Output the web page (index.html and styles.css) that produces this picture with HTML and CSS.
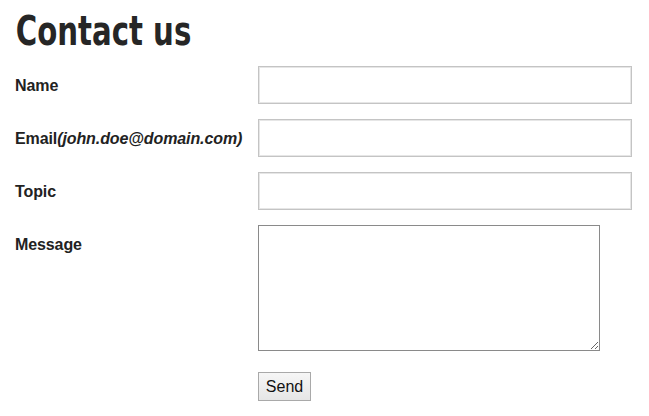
FILE: index.html
```html
<!DOCTYPE html>
<html>
<head>
<meta charset="utf-8">
<link rel="stylesheet" href="styles.css">
</head>
<body>
<div class="page">
  <h1 class="title"><span class="title-text">Contact us</span></h1>
  <form class="form">
    <label class="label" for="name">Name</label>
    <input class="field" id="name" type="text">
    <label class="label" for="email">Email<em>(john.doe@domain.com)</em></label>
    <input class="field" id="email" type="text">
    <label class="label" for="topic">Topic</label>
    <input class="field" id="topic" type="text">
    <label class="label" for="message">Message</label>
    <textarea class="area" id="message"></textarea>
    <span></span>
    <div class="actions"><button class="send" type="button">Send</button></div>
  </form>
</div>
</body>
</html>
```
FILE: styles.css
```css
html, body {
  margin: 0;
  padding: 0;
  background: #fff;
}
.page {
  padding: 0 15px;
  font-family: "Liberation Sans", Arial, sans-serif;
  color: #222;
}
.title {
  margin: 0;
  padding-top: 8px;
  height: 58px;
  font-family: "DejaVu Sans", sans-serif;
  font-weight: bold;
  font-size: 40px;
  line-height: 46px;
  color: #262626;
}
.title-text {
  display: inline-block;
  transform: scaleX(0.73);
  transform-origin: 0 50%;
  padding-left: 1px;
}
.form {
  display: grid;
  grid-template-columns: 243px 1fr;
  row-gap: 15px;
  align-items: start;
}
.label {
  font-weight: bold;
  font-size: 16px;
  line-height: 36px;
  padding-top: 2px;
  color: #222;
  letter-spacing: -0.1px;
}
.label em {
  font-style: italic;
}
.field {
  box-sizing: border-box;
  width: 374px;
  height: 38px;
  margin: 0;
  border: 1px solid #c4c4c4;
  box-shadow: inset 0 0 0 1px #e6e6e6;
  background: #fff;
  padding: 4px;
}
.area {
  box-sizing: border-box;
  width: 342px;
  height: 126px;
  margin: 0;
  border: 1px solid #8a8a8a;
  background: #fff;
  padding: 2px;
}
.actions {
  padding-top: 6px;
}
.send {
  box-sizing: border-box;
  width: 53px;
  height: 29px;
  margin: 0;
  padding: 0;
  border: 1px solid #a9a9a9;
  background: linear-gradient(#f6f6f6, #e6e6e6);
  font-family: "Liberation Sans", Arial, sans-serif;
  font-size: 16px;
  color: #111;
}
```
